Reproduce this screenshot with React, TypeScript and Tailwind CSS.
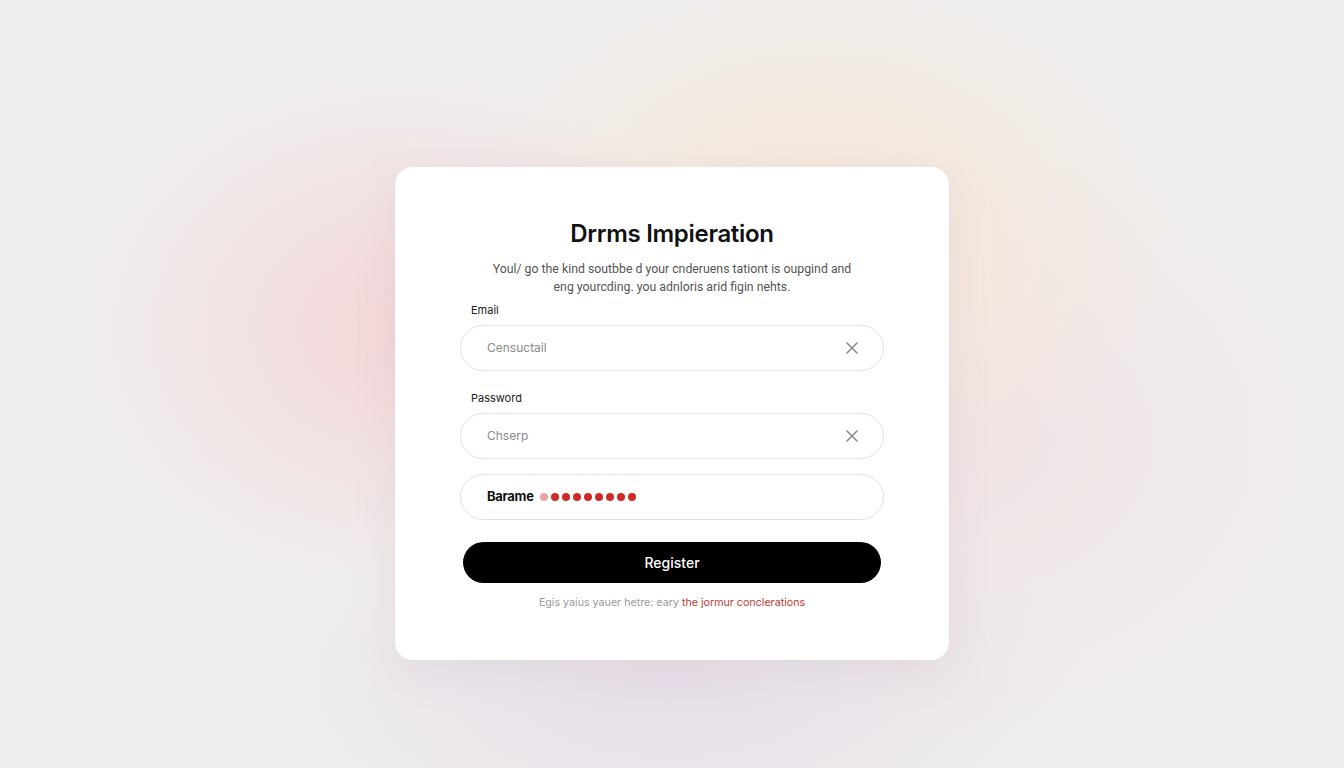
import React from 'react'

const ClearIcon = () => (
  <svg width="14" height="14" viewBox="0 0 14 14" fill="none" stroke="#8a8a8a" strokeWidth="1.6" strokeLinecap="round">
    <path d="M2 2L12 12M12 2L2 12" />
  </svg>
)

const Field = ({ label, placeholder }: { label: string; placeholder: string }) => (
  <div className="flex flex-col">
    <label className="pl-[11px] text-[11px] leading-[14px] text-[#222]">{label}</label>
    <div className="mt-[8px] flex h-[46px] items-center justify-between rounded-full border border-[#e2e2e2] bg-white pl-[26px] pr-[24px]">
      <span className="text-[12px] text-[#8a8a8a]">{placeholder}</span>
      <ClearIcon />
    </div>
  </div>
)

const App = () => {
  const dots = [0, 1, 2, 3, 4, 5, 6, 7, 8]

  return (
    <div
      className="flex min-h-screen items-center justify-center bg-[#efeeed] bg-[radial-gradient(ellipse_320px_260px_at_400px_330px,#f4d6d8,transparent),radial-gradient(ellipse_360px_260px_at_820px_230px,#f7e6d6,transparent),radial-gradient(ellipse_420px_200px_at_670px_680px,#e6dee8,transparent),radial-gradient(ellipse_380px_300px_at_960px_440px,#f1e3e4,transparent)] pt-[58px]"
      style={{ fontFamily: 'Inter, "Liberation Sans", sans-serif' }}
    >
      <div className="w-[554px] rounded-[18px] bg-white px-[65px] pb-[49px] pt-[51px] shadow-[0_10px_40px_rgba(180,150,170,0.15)]">
        <h1 className="text-center text-[24px] font-semibold leading-[32px] tracking-[-0.3px] text-[#111]">Drrms Impieration</h1>
        <p
          className="mt-[10px] whitespace-nowrap text-center text-[12.3px] leading-[18px] text-[#555]"
          style={{ fontFamily: 'Roboto, "Liberation Sans", sans-serif' }}
        >
          Youl/ go the kind soutbbe d your cnderuens tationt is oupgind and
          <br />
          eng yourcding. you adnloris arid figin nehts.
        </p>

        <div className="mt-[7px]">
          <Field label="Email" placeholder="Censuctail" />
        </div>
        <div className="mt-[20px]">
          <Field label="Password" placeholder="Chserp" />
        </div>

        <div className="mt-[15px] flex h-[46px] items-center gap-[6px] rounded-full border border-[#e2e2e2] bg-white pl-[26px]">
          <span className="text-[13px] font-bold tracking-[-0.3px] text-[#111]">Barame</span>
          <div className="flex items-center gap-[3px]">
            {dots.map((d) => (
              <span key={d} className={d === 0 ? 'h-[8px] w-[8px] rounded-full bg-[#eba3a8]' : 'h-[8px] w-[8px] rounded-full bg-[#d12a26]'} />
            ))}
          </div>
        </div>

        <button className="mx-auto mt-[22px] flex h-[41px] w-[418px] items-center justify-center rounded-full bg-black text-[14px] font-medium text-white">
          Register
        </button>

        <p className="mt-[12px] text-center text-[10.7px] leading-[16px] text-[#9a9a9a]">
          Egis yaius yauer hetre: eary <span className="text-[#c0392f]">the jormur conclerations</span>
        </p>
      </div>
    </div>
  )
}

export default App
